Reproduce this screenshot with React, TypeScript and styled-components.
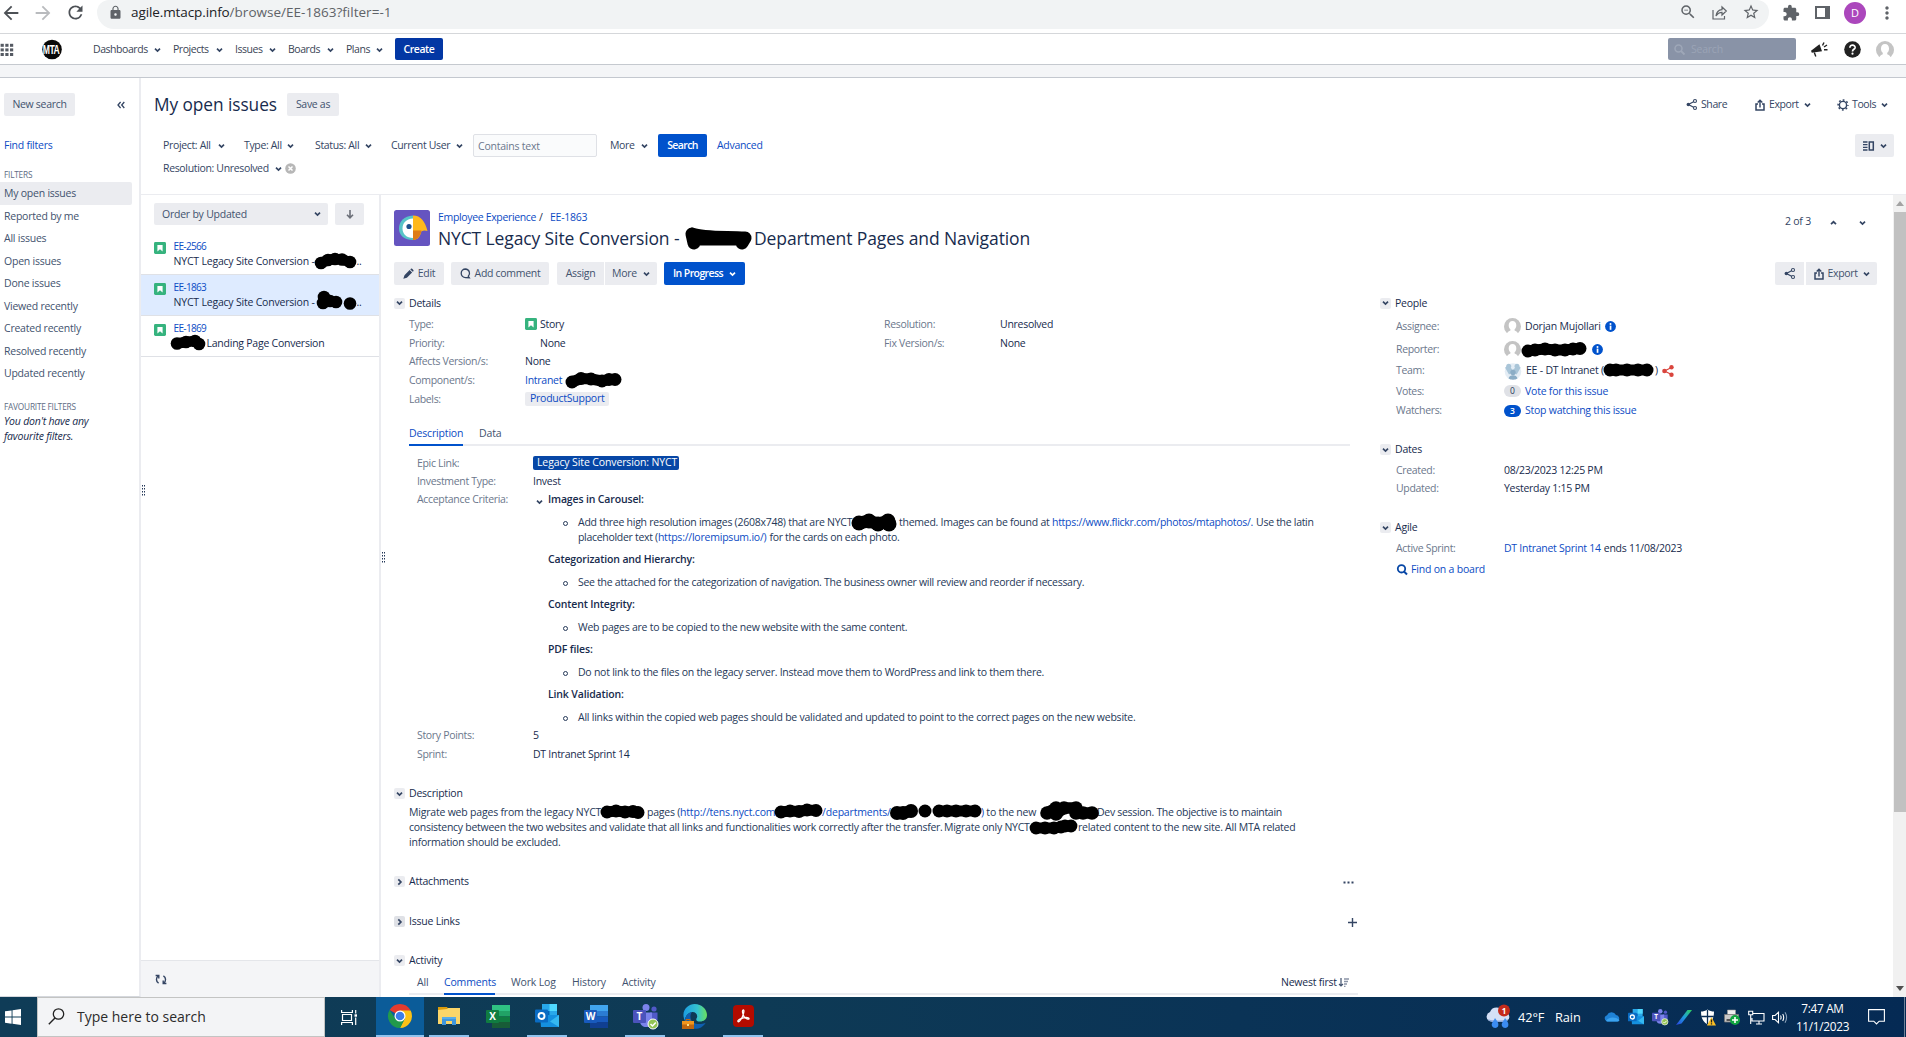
import React from "react";
import styled, { createGlobalStyle, css } from "styled-components";
import {
  MdArrowBack,
  MdArrowForward,
  MdRefresh,
  MdLock,
  MdStarBorder,
  MdZoomOut,
  MdExtension,
  MdMoreVert,
} from "react-icons/md";

const GlobalStyle = createGlobalStyle`
  * { box-sizing: border-box; }
  body {
    margin: 0;
    overflow: hidden;
    background: #fff;
    color: #172b4d;
    font-family: "Open Sans", "Noto Sans", sans-serif;
    font-size: 10.5px;
    line-height: 15px;
    letter-spacing: -0.23px;
  }
  svg { display: block; flex: none; overflow: visible; }
`;

/* ---------- shared parts ---------- */

const Screen = styled.div`
  width: 1906px;
  height: 1037px;
  display: flex;
  flex-direction: column;
  overflow: hidden;
`;

const Slot = styled.div<{ $w?: number; $ls?: number; $gap?: number }>`
  display: flex;
  align-items: center;
  flex: none;
  white-space: nowrap;
  ${(p) => p.$w !== undefined && css`width: ${p.$w}px;`}
  ${(p) => p.$ls !== undefined && css`letter-spacing: ${p.$ls}px;`}
  ${(p) => p.$gap !== undefined && css`gap: ${p.$gap}px;`}
`;

const Spacer = styled.div`
  flex: 1;
`;

const Link = styled.span<{ $ls?: number }>`
  color: #0c4bc4;
  white-space: nowrap;
  ${(p) => p.$ls !== undefined && css`letter-spacing: ${p.$ls}px;`}
`;

function Chevron({ color = "#344563", dir = "down" }: { color?: string; dir?: "down" | "up" | "right" }) {
  const d = dir === "down" ? "M1 1.6 3.5 4 6 1.6" : dir === "up" ? "M1 4.2 3.5 1.8 6 4.2" : "M2.3 .4 4.9 3 2.3 5.6";
  return (
    <svg width="7" height="6" viewBox="0 0 7 6">
      <path d={d} fill="none" stroke={color} strokeWidth="1.7" />
    </svg>
  );
}

function ShareNodes({ color = "#344563", size = 11 }: { color?: string; size?: number }) {
  return (
    <svg width={size} height={size} viewBox="0 0 11 11">
      <path d="M9 2 2.4 5.5 9 9" fill="none" stroke={color} strokeWidth="1.2" />
      <circle cx="2.3" cy="5.5" r="1.7" fill={color} />
      <circle cx="9" cy="2" r="1.5" fill="#fff" stroke={color} strokeWidth="1.1" />
      <circle cx="9" cy="9" r="1.5" fill="#fff" stroke={color} strokeWidth="1.1" />
    </svg>
  );
}

function ExportIcon() {
  return (
    <svg width="10" height="12" viewBox="0 0 10 12">
      <path d="M3 5H1v6h8V5H7" fill="none" stroke="#344563" strokeWidth="1.5" />
      <path d="M5 8.5V2M2.7 3.6 5 1.2l2.3 2.4" fill="none" stroke="#344563" strokeWidth="1.4" />
    </svg>
  );
}

function GearIcon() {
  return (
    <svg width="12" height="12" viewBox="0 0 12 12">
      <circle cx="6" cy="6" r="3.6" fill="none" stroke="#344563" strokeWidth="1.4" />
      <circle cx="6" cy="6" r="4.9" fill="none" stroke="#344563" strokeWidth="1.5" strokeDasharray="1.8 2.05" strokeDashoffset=".9" />
    </svg>
  );
}

function StoryIcon({ size = 12 }: { size?: number }) {
  return (
    <svg width={size} height={size} viewBox="0 0 12 12">
      <rect width="12" height="12" rx="1.4" fill="#36b37e" />
      <path d="M3.4 3h5.2v6.6L6 7.3 3.4 9.6z" fill="#fff" />
    </svg>
  );
}

function Person({ size = 17 }: { size?: number }) {
  return (
    <svg width={size} height={size} viewBox="0 0 17 17">
      <circle cx="8.5" cy="8.5" r="8.5" fill="#c4c4c4" />
      <path d="M2.8 17c.2-2.6 1.4-3.6 3.6-4.5v-1.3C5.2 10.3 4.7 9 4.7 7.2c0-2.6 1.4-4.3 3.8-4.3s3.8 1.7 3.8 4.3c0 1.8-.5 3.1-1.7 4v1.3c2.2.9 3.4 1.9 3.6 4.5z" fill="#fff" />
    </svg>
  );
}

function Info() {
  return (
    <svg width="11" height="11" viewBox="0 0 11 11">
      <circle cx="5.5" cy="5.5" r="5.4" fill="#0052cc" />
      <circle cx="5.5" cy="2.9" r="1" fill="#fff" />
      <rect x="4.7" y="4.6" width="1.7" height="4.2" fill="#fff" />
    </svg>
  );
}

const Marker = styled.svg`
  position: relative;
  z-index: 1;
`;

/* A marker scribble: overlapping round dabs joined by a thick stroke. */
function Redaction({ w, dots, r = 7, bar = true }: { w: number; dots: number[][]; r?: number; bar?: boolean }) {
  return (
    <Marker width={w} height="15" viewBox={`0 0 ${w} 15`}>
      {bar && (
        <polyline
          points={dots.map((d) => d.join(",")).join(" ")}
          fill="none"
          stroke="#000"
          strokeWidth={r * 1.7}
          strokeLinecap="round"
          strokeLinejoin="round"
        />
      )}
      {dots.map((d, i) => (
        <circle key={i} cx={d[0]} cy={d[1]} r={r} fill="#000" />
      ))}
    </Marker>
  );
}

/* ---------- browser toolbar ---------- */

const BrowserBar = styled.header`
  height: 34px;
  flex: none;
  display: flex;
  border-bottom: 1px solid #d5d7da;
  color: #5f6368;
  line-height: 24px;
`;

const BarIcons = styled.div<{ $w: number; $pl?: number }>`
  width: ${(p) => p.$w}px;
  height: 25px;
  padding-left: ${(p) => p.$pl || 0}px;
  display: flex;
  align-items: center;
  flex: none;
`;

const Omnibox = styled.div`
  width: 1672px;
  height: 29px;
  padding: 0 9px 5px 11px;
  display: flex;
  align-items: center;
  background: #f1f3f4;
  border-radius: 12px 12px 17px 17px;
`;

const Url = styled.div`
  margin-left: 8px;
  font-size: 13.5px;
  letter-spacing: 0.02px;
  color: #5f6368;
  b { font-weight: 400; color: #202124; letter-spacing: -0.1px; }
`;

const Profile = styled.div`
  width: 22px;
  height: 22px;
  margin-left: 14px;
  border-radius: 50%;
  background: #ab47bc;
  color: #fff;
  font-size: 11px;
  line-height: 22px;
  text-align: center;
`;

const BarDots = styled.div`
  padding-left: 11px;
`;

function BrowserToolbar() {
  return (
    <BrowserBar>
      <BarIcons $w={97}>
        <Slot $w={32}><MdArrowBack size={22} color="#4d5156" /></Slot>
        <Slot $w={33}><MdArrowForward size={22} color="#b9bbbe" /></Slot>
        <MdRefresh size={21} color="#4d5156" />
      </BarIcons>
      <Omnibox>
        <MdLock size={15} />
        <Url><b>agile.mtacp.info</b>/browse/EE-1863?filter=-1</Url>
        <Spacer />
        <Slot $gap={15}>
          <MdZoomOut size={18} />
          <svg width="15" height="15" viewBox="0 0 15 15">
            <path d="M1 5v9h11.5v-3M4 11c.5-4 2.5-6 6-6.3V2l4.3 4-4.3 4V7.3C7.5 7.3 5.5 8.5 4 11z" fill="none" stroke="#5f6368" strokeWidth="1.2" />
          </svg>
          <MdStarBorder size={18} />
        </Slot>
      </Omnibox>
      <BarIcons $w={137} $pl={13}>
        <Slot $w={33}><MdExtension size={18} /></Slot>
        <svg width="15" height="13" viewBox="0 0 15 13">
          <path d="M1 1h13v11H1z" fill="none" stroke="#5f6368" strokeWidth="2" />
          <path d="M10 0h5v13h-5z" fill="#5f6368" />
        </svg>
        <Profile>D</Profile>
        <Slot $w={40}><BarDots><MdMoreVert size={20} /></BarDots></Slot>
      </BarIcons>
    </BrowserBar>
  );
}

/* ---------- application header ---------- */

const AppHeader = styled.nav`
  height: 31px;
  padding-top: 4px;
  flex: none;
  display: flex;
  align-items: flex-start;
  border-bottom: 1px solid #c5c9cf;
  color: #344563;
`;

const HeadCell = styled.div<{ $w?: number }>`
  height: 23px;
  display: flex;
  align-items: center;
  flex: none;
  ${(p) => p.$w && css`width: ${p.$w}px;`}
`;

const NavItem = styled.div<{ $w: number; $text: number }>`
  width: ${(p) => p.$w}px;
  height: 23px;
  display: flex;
  align-items: center;
  color: #3a4455;
  letter-spacing: -0.45px;
  flex: none;
  span { width: ${(p) => p.$text}px; flex: none; white-space: nowrap; }
`;

const CreateButton = styled.button`
  width: 48px;
  height: 22px;
  padding: 0;
  border: 0;
  border-radius: 2px;
  background: #0337a4;
  color: #fff;
  font: 600 10.5px/22px "Open Sans", sans-serif;
  letter-spacing: -0.45px;
`;

const QuickSearch = styled.div`
  width: 128px;
  height: 22px;
  margin-right: 15px;
  padding-left: 6px;
  display: flex;
  align-items: center;
  gap: 6px;
  border-radius: 2px;
  background: #8993a7;
  color: #9ba4b6;
`;

const AnnouncementStrip = styled.div`
  height: 13px;
  flex: none;
  background: #f4f5f7;
  border-bottom: 1px solid #c4c8cf;
`;

const MtaText = styled.text`
  font: 700 12px "Liberation Sans", sans-serif;
  letter-spacing: -0.6px;
  fill: #fff;
`;

const nav = [
  { t: "Dashboards", w: 80, x: 61 },
  { t: "Projects", w: 62, x: 43 },
  { t: "Issues", w: 53, x: 34 },
  { t: "Boards", w: 58, x: 39 },
  { t: "Plans", w: 49, x: 30 },
];

function ApplicationHeader() {
  return (
    <>
      <AppHeader>
        <HeadCell $w={42}>
          <svg width="14" height="14" viewBox="0 0 14 14">
            {[0, 1, 2].map((r) => [0, 1, 2].map((c) => (
              <rect key={`${r}${c}`} x={0.6 + c * 4.7} y={0.8 + r * 4.6} width="3.2" height="3" fill="#555a63" />
            )))}
          </svg>
        </HeadCell>
        <HeadCell $w={51}>
          <svg width="20" height="20" viewBox="0 0 20 20">
            <circle cx="10" cy="9.5" r="9.8" fill="#080808" />
            <g transform="translate(9 13.8) scale(.72 1)">
              <MtaText x="0" y="0" textAnchor="middle">MTA</MtaText>
            </g>
          </svg>
        </HeadCell>
        {nav.map((n) => (
          <NavItem key={n.t} $w={n.w} $text={n.x}>
            <span>{n.t}</span>
            <Chevron />
          </NavItem>
        ))}
        <CreateButton>Create</CreateButton>
        <Spacer />
        <QuickSearch>
          <svg width="11" height="11" viewBox="0 0 11 11">
            <circle cx="4.5" cy="4.5" r="3.5" fill="none" stroke="#9ea7b8" strokeWidth="1.5" />
            <path d="m7 7 3.5 3.5" stroke="#9ea7b8" strokeWidth="1.8" />
          </svg>
          Search
        </QuickSearch>
        <HeadCell $w={33}>
          <svg width="17" height="15" viewBox="0 0 17 15">
            <path d="m0 8.7 8.500-6.500 2.500 7L.8 10.800z" fill="#222" />
            <path d="m3.300 10.500 1.500 4M11.500 3.500l1.500-3M13 5l3-2M13 7.800h3.500" fill="none" stroke="#222" strokeWidth="1.4" />
          </svg>
        </HeadCell>
        <HeadCell $w={32}>
          <svg width="17" height="17" viewBox="0 0 17 17">
            <circle cx="8.500" cy="8.500" r="8.300" fill="#222" />
            <path d="M5.900 6.700c0-3.600 5.500-3.300 5.200 0-.2 1.700-2.600 1.600-2.600 3.700" fill="none" stroke="#fff" strokeWidth="1.7" />
            <circle cx="8.500" cy="12.700" r="1.100" fill="#fff" />
          </svg>
        </HeadCell>
        <HeadCell $w={30}><Person size={18} /></HeadCell>
      </AppHeader>
      <AnnouncementStrip />
    </>
  );
}

/* ---------- filter sidebar ---------- */

const Body = styled.div`
  flex: 1;
  min-height: 0;
  display: flex;
`;

const Sidebar = styled.aside`
  width: 141px;
  flex: none;
  border-right: 2px solid #ebecf0;
  border-bottom: 1px solid #d5d8dd;
  padding-top: 15px;
  color: #42526e;
`;

const SideTop = styled.div`
  display: flex;
  align-items: center;
  padding-left: 4px;
  gap: 42px;
`;

const GreyButton = styled.button<{ $w: number; $h?: number; $left?: boolean; $right?: boolean; $ls?: number; $gap?: number }>`
  width: ${(p) => p.$w}px;
  height: ${(p) => p.$h || 23}px;
  padding: 0;
  flex: none;
  display: flex;
  align-items: center;
  justify-content: center;
  gap: ${(p) => p.$gap ?? 4}px;
  border: 0;
  border-radius: ${(p) => (p.$left ? "2px 0 0 2px" : p.$right ? "0 2px 2px 0" : "2px")};
  background: #ebecf0;
  color: #42526e;
  font: 400 10.5px/15px "Open Sans", sans-serif;
  letter-spacing: ${(p) => p.$ls ?? -0.3}px;
  white-space: nowrap;
`;

const FindFilters = styled.div`
  margin: 22px 0 0 4px;
  color: #0c4bc4;
  letter-spacing: -0.25px;
`;

const SideHeading = styled.h5<{ $top: number }>`
  margin: ${(p) => p.$top}px 0 0 4px;
  font-size: 8.3px;
  line-height: 14px;
  font-weight: 500;
  letter-spacing: -0.22px;
  color: #5e6c84;
`;

const SideItem = styled.div<{ $active?: boolean }>`
  width: 132px;
  height: 22.5px;
  padding-left: 4px;
  line-height: 23px;
  border-radius: 0 2px 2px 0;
  background: ${(p) => (p.$active ? "#ebecf0" : "transparent")};
`;

const SideEmpty = styled.p`
  width: 110px;
  margin: 0 0 0 4px;
  font-style: italic;
  letter-spacing: -0.2px;
  color: #172b4d;
`;

const filters = ["My open issues", "Reported by me", "All issues", "Open issues", "Done issues", "Viewed recently", "Created recently", "Resolved recently", "Updated recently"];

function FilterSidebar() {
  return (
    <Sidebar>
      <SideTop>
        <GreyButton $w={71}>New search</GreyButton>
        <svg width="8" height="8" viewBox="0 0 8 8">
          <path d="M3.600 1 1 4l2.600 3M7.300 1 4.700 4l2.600 3" fill="none" stroke="#344563" strokeWidth="1.3" />
        </svg>
      </SideTop>
      <FindFilters>Find filters</FindFilters>
      <SideHeading $top={15}>FILTERS</SideHeading>
      {filters.map((f, i) => (
        <SideItem key={f} $active={i === 0}>{f}</SideItem>
      ))}
      <SideHeading $top={15.5}>FAVOURITE FILTERS</SideHeading>
      <SideEmpty>You don't have any favourite filters.</SideEmpty>
    </Sidebar>
  );
}

/* ---------- navigator header ---------- */

const Navigator = styled.main`
  flex: 1;
  min-width: 0;
  display: flex;
  flex-direction: column;
`;

const NavHead = styled.div`
  height: 117px;
  flex: none;
  padding: 15px 12px 0 13px;
  border-bottom: 1px solid #ebecf0;
  color: #344563;
`;

const TitleRow = styled.div`
  height: 23px;
  display: flex;
  align-items: center;
`;

const PageTitle = styled.h1`
  width: 133px;
  margin: 0;
  font-size: 17.3px;
  line-height: 23px;
  font-weight: 500;
  letter-spacing: -0.06px;
  color: #172b4d;
  white-space: nowrap;
`;

const FilterRow = styled.div<{ $top: number; $h: number }>`
  margin-top: ${(p) => p.$top}px;
  height: ${(p) => p.$h}px;
  padding-left: 9px;
  display: flex;
  align-items: center;
`;

const Criterion = styled.div<{ $w: number; $text: number }>`
  width: ${(p) => p.$w}px;
  flex: none;
  display: flex;
  align-items: center;
  white-space: nowrap;
  letter-spacing: -0.34px;
  span { width: ${(p) => p.$text}px; flex: none; }
`;

const TextInput = styled.div`
  width: 124px;
  height: 23px;
  margin-right: 13px;
  padding-left: 4px;
  line-height: 22px;
  border: 1px solid #dfe1e6;
  border-radius: 2px;
  background: #fafbfc;
  color: #6b778c;
`;

const BlueButton = styled.button<{ $w: number; $gap?: number }>`
  width: ${(p) => p.$w}px;
  height: 23px;
  padding: 0;
  flex: none;
  display: flex;
  align-items: center;
  justify-content: center;
  gap: 6px;
  border: 0;
  border-radius: 2px;
  background: #0052cc;
  color: #fff;
  font: 600 10.5px/15px "Open Sans", sans-serif;
  letter-spacing: -0.6px;
  white-space: nowrap;
`;

const Advanced = styled(Link)`
  padding-left: 10px;
  letter-spacing: -0.3px;
`;

function NavigatorHeader() {
  return (
    <NavHead>
      <TitleRow>
        <PageTitle>My open issues</PageTitle>
        <GreyButton $w={52}>Save as</GreyButton>
        <Spacer />
        <Slot $w={69} $gap={4} $ls={-0.4}><ShareNodes />Share</Slot>
        <Slot $w={82} $gap={4} $ls={-0.4}><ExportIcon /><Slot $w={31}>Export</Slot><Chevron /></Slot>
        <Slot $w={57} $gap={3} $ls={-0.4}><GearIcon /><Slot $w={26}>Tools</Slot><Chevron /></Slot>
      </TitleRow>
      <FilterRow $top={18} $h={23}>
        <Criterion $w={81} $text={55}><span>Project: All</span><Chevron /></Criterion>
        <Criterion $w={71} $text={43}><span>Type: All</span><Chevron /></Criterion>
        <Criterion $w={76} $text={50}><span>Status: All</span><Chevron /></Criterion>
        <Criterion $w={82} $text={65}><span>Current User</span><Chevron /></Criterion>
        <TextInput>Contains text</TextInput>
        <Criterion $w={48} $text={31}><span>More</span><Chevron /></Criterion>
        <BlueButton $w={49}>Search</BlueButton>
        <Slot $w={60}><Advanced>Advanced</Advanced></Slot>
        <Spacer />
        <GreyButton $w={39} $gap={6}>
          <svg width="11" height="10" viewBox="0 0 11 10">
            <path d="M0 1h4.500M0 3.600h4.500M0 6.300h4.500M0 9h4.500" stroke="#344563" strokeWidth="1.3" />
            <path d="M6.300.9h4v8.200h-4z" fill="none" stroke="#344563" strokeWidth="1.5" />
          </svg>
          <Chevron />
        </GreyButton>
      </FilterRow>
      <FilterRow $top={4} $h={15}>
        <Criterion $w={122} $text={112}><span>Resolution: Unresolved</span><Chevron /></Criterion>
        <svg width="11" height="11" viewBox="0 0 11 11">
          <circle cx="5.500" cy="5.500" r="5.300" fill="#b7b7b7" />
          <path d="m3.500 3.500 4 4m0-4-4 4" stroke="#fff" strokeWidth="1.5" />
        </svg>
      </FilterRow>
    </NavHead>
  );
}

/* ---------- issue list ---------- */

const Split = styled.div`
  flex: 1;
  min-height: 0;
  display: flex;
`;

const ListPane = styled.section`
  width: 240px;
  flex: none;
  display: flex;
  flex-direction: column;
  border-right: 2px solid #ebecf0;
`;

const OrderRow = styled.div`
  padding: 8px 0 9px 13px;
  display: flex;
  gap: 7px;
`;

const OrderSelect = styled.div`
  width: 174px;
  height: 22px;
  padding: 0 7px 0 8px;
  display: flex;
  align-items: center;
  justify-content: space-between;
  border-radius: 2px;
  background: #ebecf0;
  color: #42526e;
`;

const IssueItem = styled.article<{ $active?: boolean }>`
  height: 41px;
  padding: 8px 0 0 13px;
  display: flex;
  gap: 7.5px;
  background: ${(p) => (p.$active ? "#deebff" : "#fff")};
  border-bottom: 1px solid #dfe1e6;
  color: #172b4d;
`;

const IssueText = styled.div`
  margin-top: -3px;
  display: flex;
  flex-direction: column;
`;

const IssueKey = styled(Link)`
  font-size: 10px;
  letter-spacing: -0.65px;
`;

const ListFooter = styled.footer`
  margin-top: auto;
  height: 37px;
  padding: 13px 0 0 14px;
  border-top: 1px solid #e4e6ea;
  background: #f4f5f7;
`;

const Grip = styled.div<{ $x: number; $y: number }>`
  position: absolute;
  left: ${(p) => p.$x}px;
  top: ${(p) => p.$y}px;
`;

function GripDots() {
  return (
    <svg width="3" height="12" viewBox="0 0 3 12">
      <path d="M.5 0v12M2.500 0v12" stroke="#253858" strokeWidth="1" strokeDasharray="1.5 1.5" />
    </svg>
  );
}

function IssueList() {
  return (
    <ListPane>
      <OrderRow>
        <OrderSelect>Order by Updated<Chevron /></OrderSelect>
        <GreyButton $w={29} $h={22}>
          <svg width="8" height="9" viewBox="0 0 8 9">
            <path d="M4 0v7.500M1 4.800l3 3 3-3" fill="none" stroke="#6b6f78" strokeWidth="1.6" />
          </svg>
        </GreyButton>
      </OrderRow>
      <IssueItem>
        <StoryIcon />
        <IssueText>
          <IssueKey>EE-2566</IssueKey>
          <Slot $ls={-0.2}>
            <Slot $w={141}>NYCT Legacy Site Conversion -</Slot>
            <Redaction w={42} r={6.3} dots={[[6, 9], [13, 6], [20, 5], [27, 5.5], [35, 8]]} />..
          </Slot>
        </IssueText>
      </IssueItem>
      <IssueItem $active>
        <StoryIcon />
        <IssueText>
          <IssueKey>EE-1863</IssueKey>
          <Slot $ls={-0.2}>
            <Slot $w={143}>NYCT Legacy Site Conversion -</Slot>
            <Redaction w={40} r={6.3} bar={false} dots={[[6, 8], [7, 2], [13, 6], [19, 7], [33, 8.5]]} />..
          </Slot>
        </IssueText>
      </IssueItem>
      <IssueItem>
        <StoryIcon />
        <IssueText>
          <IssueKey>EE-1869</IssueKey>
          <Slot $ls={-0.24}>
            <Redaction w={33} r={6.3} dots={[[3, 7.5], [12, 6], [21, 5], [25, 8]]} />
            Landing Page Conversion
          </Slot>
        </IssueText>
      </IssueItem>
      <ListFooter>
        <svg width="12" height="11" viewBox="0 0 12 11">
          <path d="M3.600 9.200C.8 7.500.8 3.800 3.300 1.800M.6 1.500h3.200v3" fill="none" stroke="#344563" strokeWidth="1.4" />
          <path d="M8.400 1.800c2.800 1.700 2.800 5.400.3 7.400M11.400 9.500H8.200v-3" fill="none" stroke="#344563" strokeWidth="1.4" />
        </svg>
      </ListFooter>
    </ListPane>
  );
}

/* ---------- issue detail ---------- */

const DetailPane = styled.section`
  flex: 1;
  min-width: 0;
  padding: 14px 16px 0 13px;
  overflow: hidden;
`;

const IssueHead = styled.header`
  height: 53px;
  display: flex;
  gap: 8px;
  padding-top: 1px;
`;

const HeadText = styled.div`
  margin-top: -0.5px;
  display: flex;
  flex-direction: column;
  gap: 1.5px;
`;

const IssueTitle = styled.h2`
  margin: 0;
  display: flex;
  align-items: center;
  font-size: 17.5px;
  line-height: 24px;
  font-weight: 500;
  letter-spacing: -0.1px;
  color: #172b4d;
  white-space: nowrap;
`;

const Pager = styled.div`
  width: 92px;
  height: 22px;
  display: flex;
  align-items: center;
  color: #344563;
`;

const PagerArrow = styled.div<{ $w: number }>`
  width: ${(p) => p.$w}px;
  padding-top: 3px;
`;

const OpsBar = styled.div`
  height: 23px;
  display: flex;
`;

const Gap = styled.div<{ $w: number }>`
  width: ${(p) => p.$w}px;
  flex: none;
`;

const Columns = styled.div`
  display: grid;
  grid-template-columns: 964px 1fr;
  column-gap: 22px;
`;

const SectionHead = styled.div<{ $top: number }>`
  margin-top: ${(p) => p.$top}px;
  height: 15px;
  display: flex;
  align-items: center;
  gap: 4px;
  font-weight: 500;
  letter-spacing: -0.22px;
  color: #172b4d;
`;

const Twixie = styled.div<{ $dark?: boolean }>`
  width: 11px;
  height: 11px;
  display: flex;
  align-items: center;
  justify-content: center;
  border-radius: 2px;
  background: ${(p) => (p.$dark ? "#dfe1e6" : "#ebecf0")};
`;

const FieldRow = styled.div<{ $h: number; $label: number; $top?: boolean }>`
  min-height: ${(p) => p.$h}px;
  display: grid;
  grid-template-columns: ${(p) => p.$label}px 1fr;
  align-items: ${(p) => (p.$top ? "start" : "center")};
  letter-spacing: -0.27px;
  white-space: nowrap;
`;

const Label = styled.div`
  color: #6b778c;
  letter-spacing: -0.32px;
`;

const CriteriaLabel = styled(Label)`
  padding-top: 1px;
`;

const Value = styled.div<{ $gap?: number }>`
  display: flex;
  align-items: center;
  gap: ${(p) => p.$gap ?? 4}px;
`;

const DetailsGrid = styled.div`
  margin: 4.5px 0 0 15px;
  display: grid;
  grid-template-columns: 475px 1fr;
`;

const LabelChip = styled.span`
  height: 14px;
  line-height: 13px;
  padding: 0 5px;
  border-radius: 2px;
  background: #ebecf0;
  color: #0c4bc4;
  letter-spacing: -0.25px;
`;

const EpicChip = styled.span`
  height: 14px;
  width: 146px;
  line-height: 13px;
  padding-left: 4px;
  border-radius: 2px;
  background: #0747a6;
  color: #fff;
  letter-spacing: -0.12px;
`;

const TabBar = styled.div<{ $top: number; $w: number; $h: number; $pl?: number }>`
  margin: ${(p) => p.$top}px 0 0 15px;
  width: ${(p) => p.$w}px;
  height: ${(p) => p.$h}px;
  padding-left: ${(p) => p.$pl || 0}px;
  display: flex;
  border-bottom: 2px solid #ebecf0;
`;

const Tab = styled.div<{ $w: number; $mr: number; $active?: boolean; $h: number }>`
  width: ${(p) => p.$w}px;
  margin-right: ${(p) => p.$mr}px;
  height: ${(p) => p.$h}px;
  line-height: ${(p) => p.$h - 2.5}px;
  border-bottom: 2px solid ${(p) => (p.$active ? "#0052cc" : "transparent")};
  color: ${(p) => (p.$active ? "#0c4bc4" : "#42526e")};
  font-weight: 500;
  letter-spacing: -0.16px;
  white-space: nowrap;
`;

const Fields = styled.div`
  margin: 8px 0 0 23px;
`;

const Criteria = styled.div`
  padding: 1px 0 0;
  display: flex;
  color: #253858;
  letter-spacing: -0.25px;
`;

const CriteriaToggle = styled.div`
  width: 15px;
  padding: 7px 0 0 3px;
`;

const CriteriaHead = styled.p<{ $first?: boolean }>`
  margin: ${(p) => (p.$first ? 0 : 7.5)}px 0 7.5px;
  font-weight: 600;
  color: #172b4d;
  letter-spacing: -0.15px;
`;

const Bullet = styled.div`
  padding-left: 15px;
  display: grid;
  grid-template-columns: 15px 1fr;
  align-items: start;
`;

const BulletMark = styled.i`
  width: 5px;
  height: 5px;
  margin-top: 6px;
  border: 1px solid #253858;
  border-radius: 50%;
`;

const Line = styled.div<{ $ls?: number }>`
  height: 15px;
  display: flex;
  align-items: center;
  white-space: nowrap;
  ${(p) => p.$ls !== undefined && css`letter-spacing: ${p.$ls}px;`}
`;

const DescriptionText = styled.div`
  margin: 4px 0 0 15px;
  color: #253858;
`;

const CountBadge = styled.span<{ $on?: boolean }>`
  width: 17px;
  height: 12px;
  border-radius: 6px;
  text-align: center;
  font-size: 8.5px;
  line-height: 12px;
  letter-spacing: 0;
  font-weight: ${(p) => (p.$on ? 600 : 400)};
  background: ${(p) => (p.$on ? "#0052cc" : "#dfe1e6")};
  color: ${(p) => (p.$on ? "#fff" : "#253858")};
`;

const AsideFields = styled.div`
  margin: 4px 0 0 16px;
`;

const Trailing = styled.div<{ $w: number }>`
  width: ${(p) => p.$w}px;
  padding-top: 1px;
`;

function Section({ title, top, closed, dark, children }: { title: string; top: number; closed?: boolean; dark?: boolean; children?: React.ReactNode }) {
  return (
    <SectionHead $top={top}>
      <Twixie $dark={dark}><Chevron dir={closed ? "right" : "down"} /></Twixie>
      {title}
      {children}
    </SectionHead>
  );
}

function ProjectAvatar() {
  return (
    <svg width="36" height="36" viewBox="0 0 36 36">
      <rect width="36" height="36" rx="2.5" fill="#6554c0" />
      <path d="M19 5.500C10 6 5 11.500 5 18.500S10.500 30 19 30z" fill="#57c4c8" />
      <path d="M19 8.500c-7 .5-10.500 4.500-10.500 10S12.500 28 19 28z" fill="#fff" />
      <path d="M19 5.500c8 0 12 6 14.500 15.500-2-.7-4-.8-6 .3-1.500 5.500-4 8.700-8.500 8.700z" fill="#ffb81c" />
      <path d="M19 20.500h8.500C26.500 26 23.500 30 19 30z" fill="#de7b16" />
      <circle cx="15" cy="16.500" r="2.600" fill="#1d4f8c" />
    </svg>
  );
}

function DetailsFields() {
  return (
    <DetailsGrid>
      <div>
        <FieldRow $h={18.75} $label={116}><Label>Type:</Label><Value $gap={3}><StoryIcon />Story</Value></FieldRow>
        <FieldRow $h={18.75} $label={116}><Label>Priority:</Label><Value $gap={0}><Gap $w={15} />None</Value></FieldRow>
        <FieldRow $h={18.25} $label={116}><Label>Affects Version/s:</Label><Value>None</Value></FieldRow>
        <FieldRow $h={18.75} $label={116}>
          <Label>Component/s:</Label>
          <Value $gap={0}><Slot $w={41}><Link>Intranet</Link></Slot><Redaction w={56} r={6.5} dots={[[6, 9], [15, 5.5], [25, 6], [36, 8], [43, 6.5], [49, 6.5]]} /></Value>
        </FieldRow>
        <FieldRow $h={19} $label={116}><Label>Labels:</Label><Value><LabelChip>ProductSupport</LabelChip></Value></FieldRow>
      </div>
      <div>
        <FieldRow $h={18.75} $label={116}><Label>Resolution:</Label><Value>Unresolved</Value></FieldRow>
        <FieldRow $h={18.75} $label={116}><Label>Fix Version/s:</Label><Value>None</Value></FieldRow>
      </div>
    </DetailsGrid>
  );
}

function AcceptanceCriteria() {
  const rest: [string, string, number][] = [
    ["Categorization and Hierarchy:", "See the attached for the categorization of navigation. The business owner will review and reorder if necessary.", -0.28],
    ["Content Integrity:", "Web pages are to be copied to the new website with the same content.", -0.24],
    ["PDF files:", "Do not link to the files on the legacy server. Instead move them to WordPress and link to them there.", -0.25],
    ["Link Validation:", "All links within the copied web pages should be validated and updated to point to the correct pages on the new website.", -0.23],
  ];
  return (
    <Criteria>
      <CriteriaToggle><Chevron /></CriteriaToggle>
      <div>
        <CriteriaHead $first>Images in Carousel:</CriteriaHead>
        <Bullet>
          <BulletMark />
          <div>
            <Line>
              <Slot $w={273} $ls={-0.26}>Add three high resolution images (2608x748) that are NYCT</Slot>
              <Redaction w={48} r={7.5} dots={[[8, 8], [18, 6], [27, 9], [37, 6], [38, 9]]} />
              <Slot $w={153}>themed. Images can be found at</Slot>
              <Link $ls={-0.28}>https://www.flickr.com/photos/mtaphotos/.</Link>
              <Gap $w={3} />
              <Slot $ls={-0.3}>Use the latin</Slot>
            </Line>
            <Line $ls={-0.3}>placeholder text (<Link $ls={-0.22}>https://loremipsum.io/)</Link><Gap $w={3} />for the cards on each photo.</Line>
          </div>
        </Bullet>
        {rest.map(([head, body, ls]) => (
          <div key={head}>
            <CriteriaHead>{head}</CriteriaHead>
            <Bullet><BulletMark /><Line $ls={ls}>{body}</Line></Bullet>
          </div>
        ))}
      </div>
    </Criteria>
  );
}

function MainColumn() {
  return (
    <div>
      <Section title="Details" top={10.5} />
      <DetailsFields />
      <TabBar $top={15.5} $w={941} $h={22}>
        <Tab $w={54} $mr={16} $h={22} $active>Description</Tab>
        <Tab $w={23} $mr={0} $h={22}>Data</Tab>
      </TabBar>
      <Fields>
        <FieldRow $h={18} $label={116}><Label>Epic Link:</Label><Value><EpicChip>Legacy Site Conversion: NYCT</EpicChip></Value></FieldRow>
        <FieldRow $h={19} $label={116}><Label>Investment Type:</Label><Value>Invest</Value></FieldRow>
        <FieldRow $h={235.5} $label={116} $top><CriteriaLabel>Acceptance Criteria:</CriteriaLabel><AcceptanceCriteria /></FieldRow>
        <FieldRow $h={18.5} $label={116}><Label>Story Points:</Label><Value>5</Value></FieldRow>
        <FieldRow $h={18.5} $label={116}><Label>Sprint:</Label><Value>DT Intranet Sprint 14</Value></FieldRow>
      </Fields>
      <Section title="Description" top={22.5} />
      <DescriptionText>
        <Line>
          <Slot $w={192} $ls={-0.2}>Migrate web pages from the legacy NYCT</Slot>
          <Redaction w={46} r={6.5} dots={[[6, 7], [15, 6], [24, 7], [32, 6.5], [37, 7.5]]} />
          <Slot $w={33}>pages (</Slot>
          <Slot $w={94} $ls={-0.18}><Link>http://tens.nyct.com/</Link></Slot>
          <Redaction w={48} r={6.5} dots={[[7, 7], [16, 6], [25, 6.5], [33, 5], [42, 5.5]]} />
          <Slot $w={68} $ls={-0.18}><Link>/departments/c</Link></Slot>
          <Redaction w={28} r={7} dots={[[7, 8], [13, 8], [21, 6]]} />
          <Redaction w={14} r={6.5} bar={false} dots={[[7, 6]]} />
          <Redaction w={49} r={6.5} dots={[[7, 6], [15, 6], [24, 6], [34, 6], [43, 6]]} />
          <Slot $w={58}><span><Link>)</Link> to the new</span></Slot>
          <Redaction w={58} r={6.8} dots={[[8, 8], [17, 3], [17, 9], [25, 3], [37, 3], [37, 8], [44, 8], [53, 8]]} />
          <Slot $ls={-0.3}>Dev session. The objective is to maintain</Slot>
        </Line>
        <Line>
          <Slot $w={535} $ls={-0.27}>consistency between the two websites and validate that all links and functionalities work correctly after the transfer.</Slot>
          <Slot $w={85} $ls={-0.25}>Migrate only NYCT</Slot>
          <Redaction w={49} r={6.4} dots={[[7, 8], [16, 8], [25, 8], [32, 7], [36, 6], [42, 6]]} />
          <Slot $ls={-0.25}>related content to the new site. All MTA related</Slot>
        </Line>
        <Line>information should be excluded.</Line>
      </DescriptionText>
      <Section title="Attachments" top={24} closed>
        <Spacer />
        <Trailing $w={15}>
          <svg width="11" height="3" viewBox="0 0 11 3">
            <path d="M.5.500h2v2h-2zM4.500.500h2v2h-2zM8.500.500h2v2h-2z" fill="#344563" />
          </svg>
        </Trailing>
      </Section>
      <Section title="Issue Links" top={25} closed dark>
        <Spacer />
        <Trailing $w={10}>
          <svg width="9" height="9" viewBox="0 0 9 9">
            <path d="M4.500 0v9M0 4.500h9" stroke="#344563" strokeWidth="1.4" />
          </svg>
        </Trailing>
      </Section>
      <Section title="Activity" top={24} />
      <TabBar $top={3.5} $w={949} $h={23} $pl={8}>
        <Tab $w={13} $mr={14} $h={23}>All</Tab>
        <Tab $w={51} $mr={16} $h={23} $active>Comments</Tab>
        <Tab $w={45} $mr={16} $h={23}>Work Log</Tab>
        <Tab $w={34} $mr={16} $h={23}>History</Tab>
        <Tab $w={35} $mr={0} $h={23}>Activity</Tab>
        <Spacer />
        <Slot $w={77} $gap={2} $ls={-0.22}>
          Newest first
          <svg width="10" height="9" viewBox="0 0 10 9">
            <path d="M2 0v8M0 6l2 2 2-2" fill="none" stroke="#42526e" strokeWidth="1.2" />
            <path d="M5 1h5M5 3.500h4M5 6h3M5 8.300h1.500" stroke="#8a94a6" strokeWidth="1.3" />
          </svg>
        </Slot>
      </TabBar>
    </div>
  );
}

function AsideColumn() {
  return (
    <div>
      <Section title="People" top={10.5} />
      <AsideFields>
        <FieldRow $h={23} $label={108}><Label>Assignee:</Label><Value><Person /><Slot $w={76} $ls={-0.2}>Dorjan Mujollari</Slot><Info /></Value></FieldRow>
        <FieldRow $h={23} $label={108}>
          <Label>Reporter:</Label>
          <Value $gap={0}><Person /><Redaction w={71} r={6.5} dots={[[7, 9], [14, 8], [24, 7], [34, 8], [44, 8], [52, 7], [59, 6.5]]} /><Info /></Value>
        </FieldRow>
        <FieldRow $h={20.5} $label={108}>
          <Label>Team:</Label>
          <Value $gap={0}>
            <svg width="18" height="18" viewBox="0 0 18 18">
              <circle cx="9" cy="9.500" r="8.300" fill="#e4edf5" />
              <circle cx="4.700" cy="4.300" r="2.500" fill="#a9c5d8" />
              <circle cx="13" cy="4.300" r="2.500" fill="#a9c5d8" />
              <path d="M1 5.500 4.500 4l4 3.500v3L5 12.500zM16.700 5.500 13.200 4l-4 3.500v3l3.500 2z" fill="#a9c5d8" />
              <circle cx="9" cy="10.500" r="2.700" fill="#8badc6" />
              <path d="M4.500 16.500C5 12 13 12 13.500 16.500c-2.500 1.600-6.500 1.600-9 0z" fill="#8badc6" />
            </svg>
            <Gap $w={4} />
            <Slot $w={76} $ls={-0.22}>EE - DT Intranet (</Slot>
            <Redaction w={53} r={6.5} dots={[[8, 7], [14, 7], [25, 7], [36, 7], [45, 7]]} />
            )
            <Gap $w={4} />
            <svg width="12" height="12" viewBox="0 0 12 12">
              <path d="M9.500 2.500 2.500 6l7 3.500" fill="none" stroke="#d9453d" strokeWidth="1.2" />
              <circle cx="2.500" cy="6" r="2.300" fill="#d9453d" />
              <circle cx="9.500" cy="2.300" r="2.200" fill="#d9453d" />
              <circle cx="9.500" cy="9.700" r="2.200" fill="#d9453d" />
            </svg>
          </Value>
        </FieldRow>
        <FieldRow $h={20} $label={108}><Label>Votes:</Label><Value><CountBadge>0</CountBadge><Link $ls={-0.22}>Vote for this issue</Link></Value></FieldRow>
        <FieldRow $h={19} $label={108}><Label>Watchers:</Label><Value><CountBadge $on>3</CountBadge><Link $ls={-0.24}>Stop watching this issue</Link></Value></FieldRow>
      </AsideFields>
      <Section title="Dates" top={22} />
      <AsideFields>
        <FieldRow $h={18.5} $label={108}><Label>Created:</Label><Value>08/23/2023 12:25 PM</Value></FieldRow>
        <FieldRow $h={18.5} $label={108}><Label>Updated:</Label><Value>Yesterday 1:15 PM</Value></FieldRow>
      </AsideFields>
      <Section title="Agile" top={22} />
      <AsideFields>
        <FieldRow $h={19} $label={108}><Label>Active Sprint:</Label><Value $gap={3}><Link $ls={-0.26}>DT Intranet Sprint 14</Link>ends 11/08/2023</Value></FieldRow>
        <FieldRow $h={22} $label={108}>
          <Value $gap={4}>
            <svg width="11" height="11" viewBox="0 0 11 11">
              <circle cx="5.500" cy="4.800" r="3.700" fill="none" stroke="#0747a6" strokeWidth="1.8" />
              <path d="m8 7.500 3 3" stroke="#0747a6" strokeWidth="2" />
            </svg>
            <Link $ls={-0.2}>Find on a board</Link>
          </Value>
        </FieldRow>
      </AsideFields>
    </div>
  );
}

function IssueDetail() {
  return (
    <DetailPane>
      <IssueHead>
        <ProjectAvatar />
        <HeadText>
          <Slot>
            <Slot $w={101} $ls={-0.34}><Link>Employee Experience</Link></Slot>
            <Slot $w={11}>/</Slot>
            <Link $ls={-0.27}>EE-1863</Link>
          </Slot>
          <IssueTitle>
            <Slot $w={247} $ls={-0.12}>NYCT Legacy Site Conversion -</Slot>
            <svg width="69" height="20" viewBox="0 0 69 20">
              <path d="M7 6 9 15M7 6c10 4 30 3 53 4l-3 5M9 11h48" fill="none" stroke="#000" strokeWidth="13" strokeLinecap="round" strokeLinejoin="round" />
            </svg>
            Department Pages and Navigation
          </IssueTitle>
        </HeadText>
        <Spacer />
        <Pager>
          <Slot $w={45}>2 of 3</Slot>
          <PagerArrow $w={29}><Chevron dir="up" /></PagerArrow>
          <PagerArrow $w={7}><Chevron /></PagerArrow>
        </Pager>
      </IssueHead>
      <OpsBar>
        <GreyButton $w={50}>
          <svg width="11" height="11" viewBox="0 0 11 11">
            <path d="M.3 10.700 1.500 7.200 6.600 2.100l2.500 2.500L3.900 9.700zM7.300 1.400 8.200.500c.5-.5 2.900 1.900 2.400 2.400l-.8.900z" fill="#344563" />
          </svg>
          Edit
        </GreyButton>
        <Gap $w={7} />
        <GreyButton $w={98}>
          <svg width="11" height="11" viewBox="0 0 11 11">
            <path d="M5.500 1a4.300 4.300 0 1 0 0 8.600l3.800.1-1-1.400A4.300 4.300 0 0 0 5.500 1z" fill="none" stroke="#344563" strokeWidth="1.3" />
          </svg>
          Add comment
        </GreyButton>
        <Gap $w={8} />
        <GreyButton $w={47} $left>Assign</GreyButton>
        <Gap $w={1} />
        <GreyButton $w={52} $right><Slot $w={27}>More</Slot><Chevron /></GreyButton>
        <Gap $w={7} />
        <BlueButton $w={81}>In Progress<Chevron color="#fff" /></BlueButton>
        <Spacer />
        <GreyButton $w={29} $left><ShareNodes /></GreyButton>
        <Gap $w={2} />
        <GreyButton $w={71} $right><ExportIcon /><Slot $w={31}>Export</Slot><Chevron /></GreyButton>
      </OpsBar>
      <Columns>
        <MainColumn />
        <AsideColumn />
      </Columns>
    </DetailPane>
  );
}

const ScrollTrack = styled.div`
  width: 13px;
  flex: none;
  padding: 6px 0 6px 1px;
  display: flex;
  flex-direction: column;
  align-items: center;
  background: #f1f1f1;
`;

const ScrollThumb = styled.div`
  width: 12px;
  height: 600px;
  margin: 6px 0 auto;
  background: #c1c1c1;
`;

/* ---------- Windows taskbar ---------- */

const Taskbar = styled.footer`
  height: 40px;
  flex: none;
  display: flex;
  background: linear-gradient(90deg, #0f3c57 0, #0e3a55 40%, #0a3356 65%, #052a54 100%);
  color: #fff;
`;

const StartButton = styled.div`
  width: 37px;
  display: flex;
  align-items: center;
  padding-left: 5px;
`;

const TaskSearch = styled.div`
  width: 288px;
  padding: 0 0 1px 10px;
  display: flex;
  align-items: center;
  gap: 12px;
  border: 1px solid #c3c4c3;
  background: #f3f4f6;
  color: #2b2b2b;
  font-size: 14px;
  letter-spacing: 0;
`;

const TaskView = styled.div`
  width: 51px;
  padding-left: 16px;
  display: flex;
  align-items: center;
`;

const TaskItem = styled.div<{ $active?: boolean; $open?: boolean }>`
  width: ${(p) => (p.$active ? 48 : 40)}px;
  margin-right: ${(p) => (p.$active ? 5 : 9)}px;
  height: 40px;
  display: flex;
  align-items: center;
  justify-content: center;
  background: ${(p) => (p.$active ? "#0b5c99" : "transparent")};
  border-bottom: 2px solid ${(p) => (p.$open || p.$active ? "#90c3ee" : "transparent")};
`;

const Glyph = styled.text<{ $s: number }>`
  font: 700 ${(p) => p.$s}px "Open Sans", sans-serif;
  letter-spacing: 0;
  fill: #fff;
`;

function ChromeLogo() {
  return (
    <svg width="24" height="24" viewBox="0 0 24 24">
      <path d="M12 12 1.600 6A12 12 0 0 1 22.400 6z" fill="#e33b2e" />
      <path d="M12 6.600h10.700A12 12 0 0 1 12 24l4.700-9.300z" fill="#fbc116" />
      <path d="M16.700 14.700 12 24A12 12 0 0 1 1.600 6l5.700 8.700z" fill="#229a4b" />
      <circle cx="12" cy="12" r="5.500" fill="#fff" />
      <circle cx="12" cy="12" r="4.300" fill="#3b7de9" />
    </svg>
  );
}

function ExplorerLogo() {
  return (
    <svg width="22" height="20" viewBox="0 0 22 20">
      <path d="M0 1h9l2 3H0z" fill="#d99b0b" />
      <path d="M0 4l9-1 1-1h12v16H0z" fill="#fbd669" />
      <path d="M4 11h14v8h-4v-4H8v4H4z" fill="#3f97dd" />
      <path d="M4 11h14v2H4z" fill="#58adea" />
    </svg>
  );
}

function OfficeTile({ letter, dark, c }: { letter: string; dark: string; c: string[] }) {
  return (
    <svg width="24" height="23" viewBox="0 0 24 23">
      <path d="M6 0h18v6H6z" fill={c[0]} />
      <path d="M6 6h18v5.500H6z" fill={c[1]} />
      <path d="M6 11.500h18V17H6z" fill={c[2]} />
      <path d="M6 17h18v6H6z" fill={c[3]} />
      <rect y="5" width="13" height="13" rx="1" fill={dark} />
      <Glyph $s={10} x="6.500" y="15.300" textAnchor="middle">{letter}</Glyph>
    </svg>
  );
}

function OutlookLogo({ size = 24 }: { size?: number }) {
  return (
    <svg width={size} height={size} viewBox="0 0 24 24">
      <path d="M7 0h15v14H7z" fill="#28a8ea" />
      <path d="M14.500 0H22v7h-7.500z" fill="#50d9ff" />
      <path d="M7 7h7.500v7H7z" fill="#0364b8" />
      <path d="M5 11h19v12H6z" fill="#1490df" />
      <path d="m24 11-9 6.500L24 23z" fill="#35b8f1" />
      <rect y="5.500" width="13" height="13" rx="1" fill="#0a6cc4" />
      <circle cx="6.500" cy="12" r="3" fill="none" stroke="#fff" strokeWidth="1.9" />
    </svg>
  );
}

function TeamsLogo({ size = 25 }: { size?: number }) {
  return (
    <svg width={size} height={size} viewBox="0 0 25 25">
      <circle cx="13" cy="3.500" r="3.500" fill="#7b83eb" />
      <circle cx="21" cy="5" r="2.600" fill="#5059c9" />
      <path d="M17 8.500h7.500v7c0 4-5 5-7.500 2z" fill="#5059c9" />
      <path d="M7 8.500h12v8.500c0 8-12 8-12 0z" fill="#7b83eb" />
      <rect y="6" width="13" height="13" rx="1" fill="#4b53bc" />
      <Glyph $s={10} x="6.500" y="16" textAnchor="middle">T</Glyph>
      <circle cx="20" cy="20" r="5" fill="#92c353" stroke="#fff" strokeWidth="1" />
      <path d="m17.500 20 2 2 3.300-3.600" fill="none" stroke="#fff" strokeWidth="1.5" />
    </svg>
  );
}

function EdgeLogo() {
  return (
    <svg width="25" height="25" viewBox="0 0 25 25">
      <defs>
        <linearGradient id="edgeSweep" x1="0" x2="1">
          <stop offset="0" stopColor="#1b9de2" />
          <stop offset=".6" stopColor="#35c3cf" />
          <stop offset="1" stopColor="#6be05c" />
        </linearGradient>
      </defs>
      <path d="M3 17C-2 7 6 0 12.500 0 20 0 25 5.500 25 11c0 4-3 6.500-7 6.500-4 0-4.500-2-3-4C16 10 13 7.500 10 8c-4 .5-7 4-7 9z" fill="url(#edgeSweep)" />
      <path d="M3 17c0-5 3-8.500 7-9-3 3-2.500 13 9 12 2.500-.3 4-1.500 4.500-1-3 5-8 6.500-12.500 5.500z" fill="#0f5fb0" />
      <rect y="17" width="12" height="8" fill="#c0660f" />
      <path d="M0 17h12v3.500H0z" fill="#f0951e" />
      <path d="M4 17v-1.500h4V17" fill="none" stroke="#c0660f" />
      <path d="M5 20h2v2H5z" fill="#fbe08a" />
    </svg>
  );
}

function AcrobatLogo() {
  return (
    <svg width="21" height="22" viewBox="0 0 21 22">
      <rect width="21" height="22" rx="4" fill="#b30b00" />
      <path d="M10 5c1.500-.5 1 3-.5 6.500C8 15 5.800 17.500 5 16.500c-.8-1.200 2-3 5.500-3.700 3-.6 5.800-.2 5.500.9-.4 1.200-3.200.2-5-2.400C9.500 9 9 5.500 10 5z" fill="none" stroke="#fff" strokeWidth="1.3" />
    </svg>
  );
}

const Tray = styled.div`
  width: 420px;
  display: flex;
  align-items: center;
`;

const Weather = styled.div`
  width: 118px;
  display: flex;
  align-items: center;
  font-size: 12.8px;
  letter-spacing: -0.1px;
`;

const TrayIcons = styled.div`
  width: 190px;
  display: flex;
  align-items: center;
`;

const TrayCell = styled.div`
  width: 24px;
  flex: none;
`;

const Clock = styled.div`
  width: 61px;
  margin-left: -2px;
  text-align: center;
  font-size: 11.8px;
  line-height: 18px;
  letter-spacing: -0.3px;
`;

const TrayEdge = styled.i`
  width: 1px;
  height: 40px;
  margin-right: 1px;
  background: #6f8398;
`;

function SystemTray() {
  return (
    <Tray>
      <Weather>
        <Slot $w={32}>
          <svg width="24" height="24" viewBox="0 0 24 24">
            <path d="M3 16a5 5 0 0 1 1-9 7 7 0 0 1 13 0 5 5 0 0 1 4 9z" fill="#d4e0f6" />
            <path d="M2 14c3 2 16 2 20 0-1 3-3 3-5 3H6c-2 0-3-1-4-3z" fill="#8fa9dc" />
            <path d="M9 13c3 4 4 6 3 8.500-1 2-5 2-6-.5s1-4 3-8zM19 13c3 4 4 6 3 8.500-1 2-5 2-6-.5s1-4 3-8z" fill="#3b8cf3" />
            <circle cx="18" cy="5.500" r="6" fill="#c42b1c" />
            <Glyph $s={8} x="18" y="8.500" textAnchor="middle">1</Glyph>
          </svg>
        </Slot>
        <Slot $w={37}>42°F</Slot>
        Rain
      </Weather>
      <TrayIcons>
        <TrayCell>
          <svg width="16" height="10" viewBox="0 0 16 10">
            <path d="M3 9.500a3.300 3.300 0 0 1 0-6.300A5 5 0 0 1 12 3a3.500 3.500 0 0 1 1.500 6.500z" fill="#1f82d6" />
            <path d="M2 9c2-4 9-5 13.500-1-.4 1-1.200 1.500-2 1.500H3.500z" fill="#3ba3f0" />
          </svg>
        </TrayCell>
        <TrayCell><OutlookLogo size={16} /></TrayCell>
        <TrayCell><TeamsLogo size={16} /></TrayCell>
        <TrayCell>
          <svg width="16" height="15" viewBox="0 0 16 15">
            <defs>
              <linearGradient id="pen" x1="1" y1="0" x2="0" y2="1">
                <stop offset="0" stopColor="#2fd35b" />
                <stop offset=".5" stopColor="#1e9be0" />
                <stop offset="1" stopColor="#2b3fe0" />
              </linearGradient>
            </defs>
            <path d="M11.500 0H16L5.500 13.500 0 15z" fill="url(#pen)" />
          </svg>
        </TrayCell>
        <TrayCell>
          <svg width="16" height="17" viewBox="0 0 16 17">
            <path d="M7.500.500c2 1.500 4.500 2 6.500 2 0 6-1.500 10-6.500 13C2.500 12.500 1 8.500 1 2.500c2 0 4.500-.5 6.500-2z" fill="#fff" />
            <path d="M7.500 1v14M1.200 7.500h12.600" stroke="#0a2d54" strokeWidth="1.3" />
            <path d="m11.500 8 4.500 8.500H7z" fill="#fbbf24" />
            <path d="M11.500 10.500v3M11.500 14.300v1.200" stroke="#222" strokeWidth="1.3" />
          </svg>
        </TrayCell>
        <TrayCell>
          <svg width="16" height="16" viewBox="0 0 16 16">
            <path d="M3.500 1h8v5h-8z" fill="#eee" stroke="#999" strokeWidth=".6" />
            <path d="M.5 5.500h14V13H.5z" fill="#c9c9c9" stroke="#777" strokeWidth=".8" />
            <path d="M2.500 10h6v2h-6z" fill="#555" />
            <circle cx="11" cy="11" r="5" fill="#10a53f" />
            <path d="M11 8v6M8 11h6" stroke="#fff" strokeWidth="1.6" />
          </svg>
        </TrayCell>
        <TrayCell>
          <svg width="17" height="15" viewBox="0 0 17 15">
            <path d="M5 3.500h11v7.500H4V8M8 14h6M11 11v3M.7 1.200h4v3.500h-4zM2.700 4.700V14" fill="none" stroke="#fff" strokeWidth="1.1" />
          </svg>
        </TrayCell>
        <TrayCell>
          <svg width="16" height="13" viewBox="0 0 16 13">
            <path d="M.6 4.500h2.500L6.500 1.200v10.600L3.100 8.500H.6z" fill="none" stroke="#fff" strokeWidth="1.1" />
            <path d="M8.500 4.500q1.200 2 0 4M10.700 3q2 3.500 0 7" fill="none" stroke="#fff" strokeWidth="1.1" />
            <path d="M13 1.200q3.200 5 0 10.600" fill="none" stroke="#8aa0b8" strokeWidth="1.1" />
          </svg>
        </TrayCell>
      </TrayIcons>
      <Clock>7:47 AM<br />11/1/2023</Clock>
      <Gap $w={15} />
      <svg width="17" height="16" viewBox="0 0 17 16">
        <path d="M.6.600h15.800v11.600h-5.200L8.500 15l-2.700-2.800H.6z" fill="none" stroke="#fff" strokeWidth="1.1" />
      </svg>
      <Spacer />
      <TrayEdge />
    </Tray>
  );
}

function WindowsTaskbar() {
  return (
    <Taskbar>
      <StartButton>
        <svg width="16" height="16" viewBox="0 0 16 16">
          <path d="M0 2.300 6.600 1.400v6.200H0zM7.500 1.200 16 0v7.600H7.500zM0 8.500h6.600v6.200L0 13.800zM7.500 8.500H16V16l-8.500-1.200z" fill="#fff" />
        </svg>
      </StartButton>
      <TaskSearch>
        <svg width="17" height="17" viewBox="0 0 17 17">
          <circle cx="10.500" cy="6" r="5.200" fill="none" stroke="#222" strokeWidth="1.3" />
          <path d="M7 10 .8 16.300" stroke="#222" strokeWidth="1.4" />
        </svg>
        Type here to search
      </TaskSearch>
      <TaskView>
        <svg width="17" height="15" viewBox="0 0 17 15">
          <path d="M1.500 4.500h9v6h-9zM.6 0v2.500h10.800V0M.6 15v-2.500h10.800V15M14.700 0v3.500M14.700 7.500V15" fill="none" stroke="#fff" strokeWidth="1.2" />
          <path d="M13.500 4.300h2.500v2.400h-2.500z" fill="#fff" />
        </svg>
      </TaskView>
      <TaskItem $active><ChromeLogo /></TaskItem>
      <TaskItem $open><ExplorerLogo /></TaskItem>
      <TaskItem><OfficeTile letter="X" dark="#107c41" c={["#2fc183", "#21a366", "#107c41", "#185c37"]} /></TaskItem>
      <TaskItem $open><OutlookLogo /></TaskItem>
      <TaskItem><OfficeTile letter="W" dark="#185abd" c={["#41a5ee", "#2b7cd3", "#185abd", "#103f91"]} /></TaskItem>
      <TaskItem $open><TeamsLogo /></TaskItem>
      <TaskItem><EdgeLogo /></TaskItem>
      <TaskItem $open><AcrobatLogo /></TaskItem>
      <Spacer />
      <SystemTray />
    </Taskbar>
  );
}

export default function App() {
  return (
    <Screen>
      <GlobalStyle />
      <BrowserToolbar />
      <ApplicationHeader />
      <Body>
        <FilterSidebar />
        <Navigator>
          <NavigatorHeader />
          <Split>
            <IssueList />
            <IssueDetail />
            <ScrollTrack>
              <svg width="8" height="5" viewBox="0 0 8 5"><path d="M4 0 8 5H0z" fill="#a3a3a3" /></svg>
              <ScrollThumb />
              <svg width="8" height="5" viewBox="0 0 8 5"><path d="M0 0h8L4 5z" fill="#505050" /></svg>
            </ScrollTrack>
          </Split>
        </Navigator>
      </Body>
      <WindowsTaskbar />
      <Grip $x={142} $y={485}><GripDots /></Grip>
      <Grip $x={382} $y={552}><GripDots /></Grip>
    </Screen>
  );
}
